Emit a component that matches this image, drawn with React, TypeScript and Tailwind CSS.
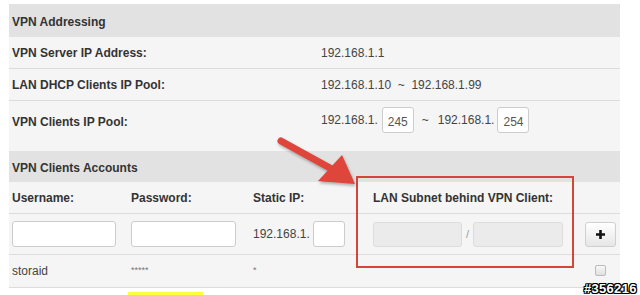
export default function App() {
  const font = { fontFamily: '"Liberation Sans", Arial, sans-serif' };
  const box = "h-[26px] bg-white border border-[#cccccc] rounded-[3px]";
  return (
    <div className="relative w-[640px] h-[295px] bg-white overflow-hidden text-[#333]" style={font}>
      <div className="pt-[4px] pl-[9px]">
        <div className="w-[611px] bg-[#f5f5f5]">
          <div className="h-[33px] bg-[#e2e2e2] flex items-center pl-[3px] pt-[2px] text-[12px] font-bold">VPN Addressing</div>
          <div className="h-[32px] border-b border-[#dcdcdc] flex items-center pl-[3px] text-[12px]">
            <div className="w-[309px] font-bold">VPN Server IP Address:</div>
            <div className="text-[#444]">192.168.1.1</div>
          </div>
          <div className="h-[32px] border-b border-[#dcdcdc] flex items-center pl-[3px] text-[12px]">
            <div className="w-[309px] font-bold">LAN DHCP Clients IP Pool:</div>
            <div className="text-[#444]">192.168.1.10 &nbsp;~&nbsp; 192.168.1.99</div>
          </div>
          <div className="h-[50px] pt-[6px] pl-[3px] text-[12px]">
            <div className="h-[26px] flex items-center">
              <div className="w-[309px] font-bold pt-[4px]">VPN Clients IP Pool:</div>
              <div className="flex items-center text-[#444]">
                <span>192.168.1.</span>
                <div className={`${box} w-[32px] ml-[4px] flex items-center pl-[5px] pt-[3px] text-[#555]`}>245</div>
                <span className="ml-[8px]">~</span>
                <span className="ml-[9px]">192.168.1.</span>
                <div className={`${box} w-[32px] ml-[3px] flex items-center pl-[5px] pt-[3px] text-[#555]`}>254</div>
              </div>
            </div>
          </div>
          <div className="h-[31px] bg-[#e2e2e2] flex items-center pl-[3px] pt-[2px] text-[12px] font-bold">VPN Clients Accounts</div>
          <div className="h-[32px] border-b border-[#dcdcdc] flex items-center pl-[3px] text-[12px] font-bold">
            <div className="w-[119px]">Username:</div>
            <div className="w-[122px]">Password:</div>
            <div className="w-[120px]">Static IP:</div>
            <div>LAN Subnet behind VPN Client:</div>
          </div>
          <div className="h-[41px] border-b border-[#dcdcdc] flex items-center pl-[3px] text-[12px]">
            <div className="w-[119px]"><div className={`${box} w-[104px]`} /></div>
            <div className="w-[122px]"><div className={`${box} w-[105px]`} /></div>
            <div className="w-[120px] flex items-center text-[#444]">
              <span>192.168.1.</span>
              <div className={`${box} w-[32px] ml-[3px]`} />
            </div>
            <div className="w-[212px] flex items-center">
              <div className="h-[25px] w-[89px] bg-[#ebebeb] border border-[#dddddd] rounded-[3px]" />
              <span className="mx-[4px] text-[#999] text-[11px]">/</span>
              <div className="h-[25px] w-[90px] bg-[#ebebeb] border border-[#dddddd] rounded-[3px]" />
            </div>
            <div className="h-[25px] w-[31px] rounded-[3px] border border-[#cfcfcf] bg-gradient-to-b from-white to-[#e6e6e6] flex items-center justify-center">
              <svg width="11" height="11" viewBox="0 0 11 11"><path d="M5.5 1v9M1 5.5h9" stroke="#111" strokeWidth="2.6" /></svg>
            </div>
          </div>
          <div className="h-[33px] border-b border-[#dcdcdc] flex items-center pl-[3px] text-[12px] text-[#444]">
            <div className="w-[119px]">storaid</div>
            <div className="w-[122px] text-[9px] text-[#777]">*****</div>
            <div className="w-[120px] text-[9px] text-[#777]">*</div>
            <div className="w-[222px]" />
            <div className="w-[11px] h-[11px] border border-[#bbb] rounded-[2px] bg-gradient-to-b from-[#f8f8f8] to-[#e0e0e0] -mt-[2px]" />
          </div>
        </div>
        <div className="h-[4px]" />
        <div className="ml-[119px] w-[75px] h-[3px] bg-[#fcff3c]" />
      </div>

      <div className="absolute left-[356px] top-[176px] w-[218px] h-[92px] border-2 border-[#d6453d]" />

      <svg className="absolute left-0 top-0" width="640" height="295" viewBox="0 0 640 295" style={{ filter: "drop-shadow(1px 2px 1.5px rgba(0,0,0,0.3))" }}>
        <path d="M281 141 L330 168" stroke="#e0453b" strokeWidth="7" strokeLinecap="round" />
        <path d="M318 181 L342 155 L355 184 Z" fill="#e0453b" />
      </svg>

      <div
        className="absolute left-[584px] top-[282px] text-[13px] font-bold text-white leading-none tracking-[0.3px]"
        style={{ textShadow: "1px 0 0 #000, -1px 0 0 #000, 0 1px 0 #000, 0 -1px 0 #000, 1px 1px 0 #000, -1px -1px 0 #000, 1px -1px 0 #000, -1px 1px 0 #000" }}
      >
        #356216
      </div>
    </div>
  );
}
